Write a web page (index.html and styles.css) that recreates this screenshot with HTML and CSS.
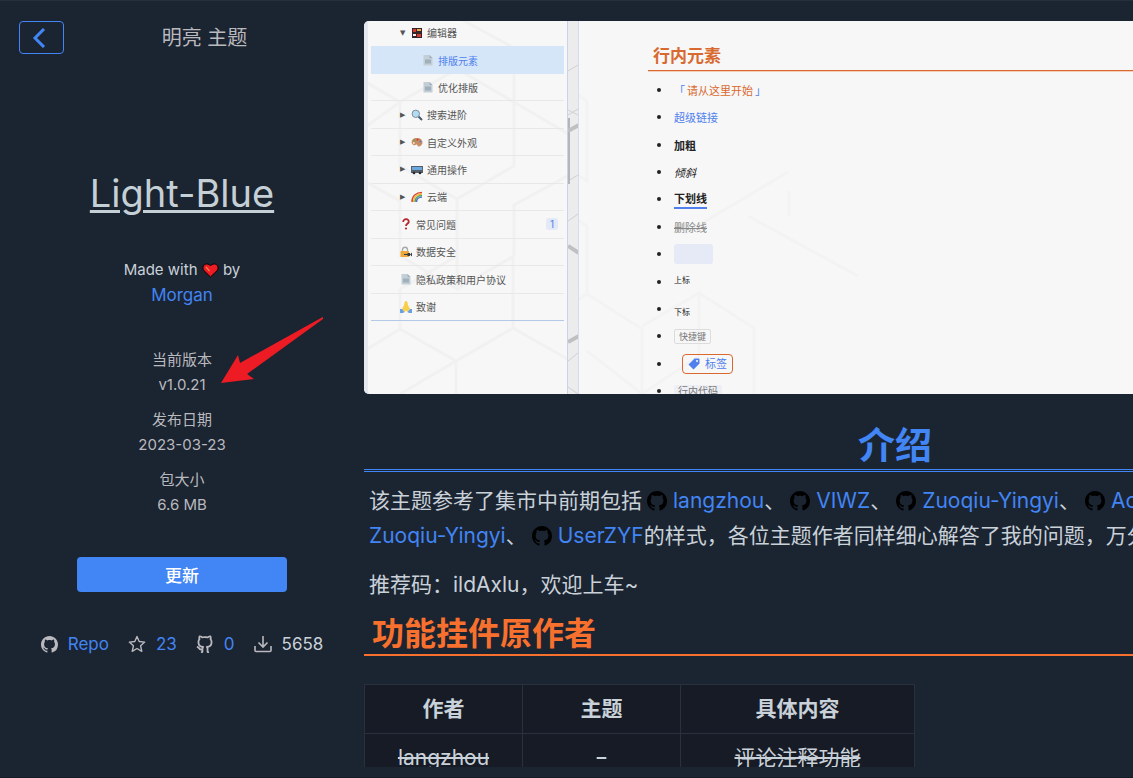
FILE: index.html
```html
<!DOCTYPE html>
<html lang="zh-CN">
<head>
    <meta charset="UTF-8">
    <meta name="viewport" content="width=device-width, initial-scale=1.0">
    <title>Light-Blue - 明亮 主题</title>
    <link rel="stylesheet" href="styles.css">
</head>
<body>
    <svg class="sprite" aria-hidden="true">
        <symbol id="icon-github" viewBox="0 0 16 16">
            <path d="M8 0C3.58 0 0 3.58 0 8c0 3.54 2.29 6.53 5.47 7.59.4.07.55-.17.55-.38 0-.19-.01-.82-.01-1.49-2.01.37-2.53-.49-2.69-.94-.09-.23-.48-.94-.82-1.13-.28-.15-.68-.52-.01-.53.63-.01 1.08.58 1.23.82.72 1.21 1.87.87 2.33.66.07-.52.28-.87.51-1.07-1.78-.2-3.64-.89-3.64-3.95 0-.87.31-1.59.82-2.15-.08-.2-.36-1.02.08-2.12 0 0 .67-.21 2.2.82.64-.18 1.32-.27 2-.27.68 0 1.36.09 2 .27 1.53-1.04 2.2-.82 2.2-.82.44 1.1.16 1.92.08 2.12.51.56.82 1.27.82 2.15 0 3.07-1.87 3.75-3.65 3.95.29.25.54.73.54 1.48 0 1.07-.01 1.93-.01 2.2 0 .21.15.46.55.38A8.013 8.013 0 0016 8c0-4.42-3.58-8-8-8z"/>
        </symbol>
        <symbol id="icon-file" viewBox="0 0 12 12">
            <path fill="#c3ced6" d="M1.5 1h6l3 3v7.500h-9z"/>
            <path fill="#9fb0bc" d="M7.500 1v3h3zM3 5.500h6v4H3z"/>
        </symbol>
    </svg>

    <div class="app">
        <aside class="side">
            <div class="side-header">
                <button class="back-button" aria-label="返回">
                    <svg width="14" height="20" viewBox="0 0 14 20"><path d="M12 1 3 10l9 9" fill="none" stroke="#4285f4" stroke-width="3"/></svg>
                </button>
                <div class="side-title">明亮 主题</div>
            </div>

            <a class="theme-name" href="#">Light-Blue</a>

            <div class="author">
                <div class="made">Made with
                    <svg class="heart" width="17" height="15" viewBox="0 0 17 15"><path d="M8.500 14 1.800 7.500C-.2 4.500 1.500 1 4.500 1c2 0 3.200.6 4 1.800C9.300 1.600 10.500 1 12.500 1c3 0 4.700 3.500 2.700 6.500z" fill="#ec1c24" stroke="#000"/><path d="m4 4 3.500 4" stroke="#f5864b" stroke-width="1.200"/></svg>
                    by</div>
                <a href="#">Morgan</a>
            </div>

            <dl class="meta">
                <dt>当前版本</dt>
                <dd>v1.0.21</dd>
                <dt>发布日期</dt>
                <dd>2023-03-23</dd>
                <dt>包大小</dt>
                <dd>6.6 MB</dd>
            </dl>

            <button class="update-button">更新</button>

            <div class="stats">
                <div class="stat">
                    <svg width="17" height="17"><use href="#icon-github"/></svg>
                    <a href="#">Repo</a>
                </div>
                <div class="stat">
                    <svg width="18" height="18" viewBox="0 0 18 18"><path d="m9 1.500 2.200 5 5.500.6-4.100 3.700 1.200 5.500L9 13.500l-4.800 2.800 1.200-5.500L1.300 7.100l5.500-.6z" fill="none" stroke="#b9b9be" stroke-width="1.400" stroke-linejoin="round"/></svg>
                    <a href="#">23</a>
                </div>
                <div class="stat">
                    <svg width="18" height="18" viewBox="2 2 20 20"><path d="M5.884 18.653c-.3-.2-.558-.455-.86-.816a50.590 50.590 0 0 1-.466-.579c-.463-.575-.755-.841-1.056-.95a1 1 0 1 1 .675-1.882c.752.27 1.261.735 1.947 1.588-.094-.117.34.427.433.539.19.227.33.365.44.438.204.137.588.196 1.150.14.024-.382.094-.753.202-1.095C5.380 15.310 3.700 13.396 3.700 9.640c0-1.240.37-2.356 1.058-3.292-.218-.894-.185-1.975.302-3.192a1 1 0 0 1 .63-.582c.081-.024.127-.035.208-.047.803-.124 1.937.17 3.415 1.096A11.730 11.730 0 0 1 12 3.315c.912 0 1.818.104 2.684.308 1.477-.933 2.614-1.227 3.422-1.096.085.013.158.03.218.05a1 1 0 0 1 .616.58c.487 1.216.52 2.296.302 3.190.691.936 1.058 2.045 1.058 3.293 0 3.757-1.674 5.665-4.642 6.392.125.415.19.878.19 1.380 0 .665-.002 1.299-.007 2.010 0 .19-.002.394-.005.706a1 1 0 0 1-.018 1.958c-1.140.227-1.984-.532-1.984-1.525l.002-.447.005-.705c.005-.707.008-1.337.008-1.997 0-.697-.184-1.152-.426-1.361-.661-.57-.326-1.654.541-1.751 2.966-.333 4.336-1.482 4.336-4.660 0-.955-.312-1.744-.913-2.404A1 1 0 0 1 17.200 6.190c.166-.414.236-.957.095-1.614l-.01.003c-.491.139-1.110.44-1.858.949a1 1 0 0 1-.833.135A9.626 9.626 0 0 0 12 5.315c-.89 0-1.772.119-2.592.35a1 1 0 0 1-.83-.134c-.752-.507-1.374-.807-1.868-.947-.144.653-.073 1.194.092 1.607a1 1 0 0 1-.189 1.045C6.016 7.890 5.700 8.694 5.700 9.640c0 3.172 1.371 4.328 4.322 4.660.865.097 1.201 1.177.544 1.748-.192.168-.429.732-.429 1.364v3.150c0 .986-.835 1.725-1.960 1.528a1 1 0 0 1-.04-1.962v-.99c-.91.061-1.662-.088-2.254-.485z"/></svg>
                    <a href="#">0</a>
                </div>
                <div class="stat">
                    <svg width="18" height="18" viewBox="0 0 18 18"><path d="M9 1v10M4.500 7.500 9 12l4.500-4.500M1 11v4.500q0 1 1 1h14q1 0 1-1V11" fill="none" stroke="#b9b9be" stroke-width="1.600"/></svg>
                    <span>5658</span>
                </div>
            </div>

            <svg class="pointer" width="104" height="68" viewBox="0 0 104 68"><path fill="#ed1c24" d="m0 66 17-28 2 8L100 1l2-1v2L26 57l7 5z"/></svg>
        </aside>

        <main class="main">
            <div class="content">
                <div class="preview">
                    <svg class="pattern" width="500" height="373" viewBox="0 0 500 373" fill="none" stroke="#f1f1f2" stroke-width="3">
                        <path d="M0 60 36 81 93 48 150 81l56 33M36 81v64l57 33v90l-57-33v-55L0 160M93 178l57-33V81M93 268l57-33v-51l57-31M150 81v-54L93-4M0 107l36-26M0 330l36-22v-40l57-33M36 308l56 32v33M92 340l57-33v-70M149 307l58 33M36 373l56-33"/>
                        <path stroke="#f3f3f4" d="m207 70 16 10v80l-16-10M207 195l16 10v68l-16 10M223 273l55 35v65M278 305l57-33v63l-57 38M335 272l55 35v66M223 330l55 43M320 213l104-62M384 195l110 60M425 170v25"/>
                    </svg>
                    <div class="doc-side">
                        <ul class="tree">
                            <li>
                                <span class="arrow">▼</span>
                                <svg width="12" height="12" viewBox="0 0 12 12"><path fill="#35242a" d="M1 1h10v10H1z"/><path fill="#d8392f" d="M2 2h3v3H2zM6 7h4v3H6z"/><path fill="#f0a94b" d="M6 2h4v2H6z"/><path fill="#f4eeee" d="M2 7h3v2H2z"/></svg>
                                编辑器
                            </li>
                            <li class="child active no-line"><svg width="12" height="12"><use href="#icon-file"/></svg>排版元素</li>
                            <li class="child"><svg width="12" height="12"><use href="#icon-file"/></svg>优化排版</li>
                            <li>
                                <span class="arrow">▶</span>
                                <svg width="12" height="12" viewBox="0 0 12 12"><path d="m7.500 7.500 3.500 3.500" stroke="#46596a" stroke-width="2"/><circle cx="4.800" cy="4.800" r="3.700" fill="#b5dbf3" stroke="#78909f"/></svg>
                                搜索进阶
                            </li>
                            <li>
                                <span class="arrow">▶</span>
                                <svg width="12" height="12" viewBox="0 0 12 12"><path d="M6 2c3.500 0 5.500 2 5.500 4.500S9 10.500 7.500 10.500s-.5-2-2-2-1.500 1.500-3 .5S0 6.500 1 4.500 3.500 2 6 2z" fill="#c98d63"/><circle cx="3.500" cy="4.500" r="1" fill="#58a55c"/><circle cx="6.500" cy="3.700" r="1" fill="#d8392f"/><circle cx="9.300" cy="5.500" r="1" fill="#4e81d9"/><circle cx="2.800" cy="7" r="1" fill="#f4e3d0"/></svg>
                                自定义外观
                            </li>
                            <li>
                                <span class="arrow">▶</span>
                                <svg width="12" height="12" viewBox="0 0 12 12"><path fill="#54616b" d="M0 3h12v7H0z"/><path fill="#6ca8e0" d="M1 4h10v3H1z"/><circle cx="3" cy="10" r="1.300" fill="#26282b"/><circle cx="9" cy="10" r="1.300" fill="#26282b"/></svg>
                                通用操作
                            </li>
                            <li>
                                <span class="arrow">▶</span>
                                <svg width="12" height="12" viewBox="0 0 12 12" fill="none" stroke-width="1.500"><path stroke="#dc4437" d="M1 11C1 5 5 1.500 11 1.500"/><path stroke="#f2b632" d="M2.500 11c0-5 3.500-8 8.500-8"/><path stroke="#54a15d" d="M4 11c0-4 3-6.500 7-6.500"/><path stroke="#4873c5" d="M5.500 11c0-3 2.500-5 5.500-5"/></svg>
                                云端
                            </li>
                            <li>
                                <svg width="12" height="12" viewBox="0 0 12 12"><path d="M3.200 4c0-4 6-3.500 5.500 0C8.400 6 6 5.700 6 8" fill="none" stroke="#b8242c" stroke-width="1.800"/><circle cx="6" cy="10.500" r="1.100" fill="#b8242c"/></svg>
                                常见问题
                                <span class="count">1</span>
                            </li>
                            <li>
                                <svg width="12" height="12" viewBox="0 0 12 12"><path d="M2.500 6V3.500c0-3 5-3 5 0V6" fill="none" stroke="#a3a9ad" stroke-width="1.300"/><path fill="#eda73a" d="M.5 5h8.500v6H.5z"/><path d="M4 8.500h5" stroke="#34393d"/><path fill="#34393d" d="M7.500 7h2.500v3H7.500zM10 8.500l2-2v4z"/></svg>
                                数据安全
                            </li>
                            <li><svg width="12" height="12"><use href="#icon-file"/></svg>隐私政策和用户协议</li>
                            <li class="last">
                                <svg width="12" height="12" viewBox="0 0 12 12"><path fill="#f8cf4a" d="M6 0c1.500 0 1.500 2 2 4l2 4-2.500 3L6 9.500 4.500 11 2 8l2-4c.5-2 .5-4 2-4z"/><path fill="#6a9fe0" d="m0 8 2 0 2.500 3-1.500 1H0zM12 8h-2l-2.500 3L9 12h3z"/></svg>
                                致谢
                            </li>
                        </ul>
                    </div>
                    <div class="gutter">
                        <svg width="10" height="373" fill="none" stroke="#cfd0d2"><path d="m0 94 10-6M0 160l10-6M0 50l10-6M0 200l10-7M0 89l10 5M0 340l10-8M0 366l10 7"/><path stroke="#b4b5b7" stroke-width="2" d="M1 97v66"/><path stroke="#bfc0c2" stroke-width="4" d="m0 110 11-6M0 225l11 7M0 321l11-6"/></svg>
                    </div>
                    <div class="doc">
                        <h3 class="doc-title">行内元素</h3>
                        <ul class="doc-list">
                            <li><span class="quote">「<em>请从这里开始</em>」</span></li>
                            <li><a href="#">超级链接</a></li>
                            <li><b>加粗</b></li>
                            <li><i>倾斜</i></li>
                            <li><b class="underlined">下划线</b></li>
                            <li><s>删除线</s></li>
                            <li><span class="blank"></span></li>
                            <li><sup>上标</sup></li>
                            <li><sub>下标</sub></li>
                            <li><kbd>快捷键</kbd></li>
                            <li>
                                <span class="tag">
                                    <svg width="12" height="12" viewBox="0 0 12 12"><path fill="#5080ee" fill-rule="evenodd" d="M6.500.5H11l.5.5v4.500l-6 6-5-5zM9 2a1 1 0 1 0 .1 0z"/></svg>
                                    标签
                                </span>
                            </li>
                            <li><code>行内代码</code></li>
                        </ul>
                    </div>
                </div>

                <h1>介绍</h1>
                <p>该主题参考了集市中前期包括<svg class="gh"><use href="#icon-github"/></svg><a href="#">langzhou</a>、<svg class="gh"><use href="#icon-github"/></svg><a href="#">VIWZ</a>、<svg class="gh"><use href="#icon-github"/></svg><a href="#">Zuoqiu-Yingyi</a>、<svg class="gh"><use href="#icon-github"/></svg><a href="#">Achuan-2</a>、<br><a href="#">Zuoqiu-Yingyi</a>、<svg class="gh"><use href="#icon-github"/></svg><a href="#">UserZYF</a>的样式，各位主题作者同样细心解答了我的问题，万分感谢！</p>
                <p>推荐码：ildAxlu，欢迎上车~</p>
                <h2>功能挂件原作者</h2>
                <table>
                    <thead>
                        <tr><th class="col-author">作者</th><th class="col-theme">主题</th><th class="col-detail">具体内容</th></tr>
                    </thead>
                    <tbody>
                        <tr><td><s>langzhou</s></td><td><s>-</s></td><td><s>评论注释功能</s></td></tr>
                    </tbody>
                </table>
            </div>
        </main>
    </div>
</body>
</html>
```
FILE: styles.css
```css
* {
    box-sizing: border-box;
}
body {
    margin: 0;
    background-color: #1b2431;
    color: #c9d1d9;
    font-family: Inter, "Noto Sans CJK SC", sans-serif;
}
a {
    color: #4285f4;
    text-decoration: none;
}
button {
    font-family: inherit;
    cursor: pointer;
}
ul, dl, dd, h1, h2, h3, p {
    margin: 0;
    padding: 0;
}
.sprite {
    display: none;
}
.app {
    display: flex;
    height: 100vh;
    overflow: hidden;
    border-top: 1px solid #262f3c;
    border-bottom: 1px solid #151b27;
}

/* 左侧信息栏 */
.side {
    position: relative;
    flex: 0 0 364px;
    display: flex;
    flex-direction: column;
    align-items: center;
    padding: 20px 19px;
}
.side-header {
    display: flex;
    align-items: center;
    align-self: stretch;
}
.back-button {
    display: flex;
    align-items: center;
    width: 45px;
    height: 33px;
    padding: 0 12px;
    background: none;
    border: 1px solid #4285f4;
    border-radius: 4px;
}
.side-title {
    flex: 1;
    text-align: center;
    font-size: 20px;
    line-height: 30px;
    color: #b9b9be;
}
.theme-name {
    margin-top: 114px;
    font-size: 38px;
    line-height: 50px;
    color: #c5d0d6;
    text-decoration: underline;
    text-decoration-thickness: 3px;
    text-underline-offset: 3px;
}
.author {
    margin-top: 39px;
    text-align: center;
    line-height: 25px;
    font-size: 17px;
}
.made {
    font-size: 15px;
    line-height: 26px;
}
.heart {
    vertical-align: -3px;
}
.meta {
    margin-top: 29px;
    text-align: center;
    font-size: 15px;
    line-height: 25px;
    color: #b9b9be;
}
.meta dt {
    margin-top: 10px;
}
.update-button {
    width: 210px;
    height: 35px;
    margin-top: 40px;
    background-color: #4285f4;
    color: #fff;
    border: none;
    border-radius: 4px;
    font-size: 17px;
    font-weight: 500;
}
.stats {
    display: flex;
    gap: 19px;
    margin-top: 39px;
    font-size: 17px;
    line-height: 26px;
}
.stat {
    display: flex;
    align-items: center;
    gap: 10px;
}
.stat svg {
    fill: #b9b9be;
}
.pointer {
    position: absolute;
    left: 221px;
    top: 316px;
}

/* 右侧说明 */
.main {
    flex: 1;
    min-width: 0;
    padding-top: 20px;
    margin-bottom: 10px;
    overflow: hidden;
}
.content {
    min-width: 1062px;
}
.preview {
    position: relative;
    display: flex;
    height: 373px;
    overflow: hidden;
    border-radius: 5px;
    background-color: #f7f7f7;
    color: #555;
    font-size: 10px;
}
.pattern {
    position: absolute;
    left: 0;
    top: 0;
}
.doc-side {
    position: relative;
    flex: 0 0 204px;
    padding: 0 3px;
    border-left: 4px solid #e6e8f0;
    border-right: 1px solid #c9d3ea;
}
.tree {
    display: grid;
    grid-auto-rows: 1fr;
    height: 302px;
    margin-top: -2px;
    list-style: none;
}
.tree li {
    display: flex;
    align-items: center;
    gap: 4px;
    padding-left: 29px;
    border-bottom: 1px solid #e8e8e9;
}
.tree li:first-child, .tree .no-line {
    border-bottom: none;
}
.tree .child {
    padding-left: 51px;
}
.tree .active {
    background-color: #d5e6f8;
    color: #5080ee;
}
.tree .last {
    border-bottom-color: #b4c9e8;
}
.arrow {
    width: 7px;
    font-family: "DejaVu Sans", sans-serif;
    font-size: 7px;
}
.count {
    margin: 0 6px 0 auto;
    padding: 0 4px;
    border-radius: 3px;
    background-color: #e3e9f7;
    color: #5080ee;
    line-height: 12px;
}
.gutter {
    position: relative;
    flex: 0 0 11px;
    background-color: #ececed;
    border-right: 1px solid #d5dcf0;
}
.doc {
    position: relative;
    flex: 1;
    padding: 22px 0 0 69px;
    color: #222;
}
.doc-title {
    padding-left: 5px;
    border-bottom: 1px solid #d9692f;
    box-shadow: 0 1px 0 #f3cdb9;
    color: #d9692f;
    font-size: 17px;
    line-height: 27px;
}
.doc-list {
    display: grid;
    grid-auto-rows: 1fr;
    height: 329px;
    margin-top: 5px;
    list-style: none;
    font-size: 11px;
}
.doc-list li {
    display: flex;
    align-items: center;
    padding-left: 9px;
}
.doc-list li::before {
    content: "";
    width: 4px;
    height: 4px;
    margin-right: 13px;
    border-radius: 50%;
    background-color: #222;
}
.doc-list a, .quote {
    color: #5080ee;
}
.quote em {
    color: #d9692f;
    font-style: normal;
    margin: 0 2px;
}
.underlined {
    box-shadow: 0 2px 0 #5080ee;
    line-height: 15px;
}
.doc-list s {
    color: #888;
}
.blank {
    width: 39px;
    height: 20px;
    border-radius: 3px;
    background-color: #e5eaf6;
}
.doc-list sup, .doc-list sub {
    font-size: 8px;
    line-height: 12px;
}
.doc-list sup {
    padding-bottom: 4px;
}
.doc-list sub {
    padding-top: 6px;
}
kbd, code {
    padding: 0 4px;
    border-radius: 2px;
    color: #777;
    font-family: inherit;
    font-size: 9px;
    line-height: 13px;
}
kbd {
    border: 1px solid #dcdcdc;
}
code {
    background-color: #eeeff4;
    font-size: 10px;
}
.tag {
    display: flex;
    align-items: center;
    gap: 5px;
    margin-left: 8px;
    padding: 0 5px;
    border: 1px solid #d9692f;
    border-radius: 4px;
    color: #5080ee;
    line-height: 18px;
}
h1 {
    margin-top: 28px;
    border-bottom: 3px double #4285f4;
    color: #4285f4;
    font-size: 37px;
    line-height: 47px;
    text-align: center;
}
p {
    margin-top: 14px;
    padding-left: 5px;
    font-size: 21px;
    line-height: 35px;
    white-space: nowrap;
}
h1 + p {
    margin-top: 11px;
}
.gh {
    width: 20px;
    height: 20px;
    margin: 0 6px 0 5px;
    vertical-align: -3px;
    fill: #000;
}
h2 {
    margin-top: 12px;
    padding-left: 8px;
    border-bottom: 2px solid #f7702d;
    color: #f7702d;
    font-size: 32px;
    line-height: 40px;
}
table {
    margin-top: 28px;
    border-collapse: collapse;
    background-color: #161b26;
    font-size: 21px;
    line-height: 30px;
    text-align: center;
}
th, td {
    padding: 9px 12px;
    border: 1px solid #29313e;
}
.col-author, .col-theme {
    width: 158px;
}
.col-detail {
    width: 234px;
}
```
